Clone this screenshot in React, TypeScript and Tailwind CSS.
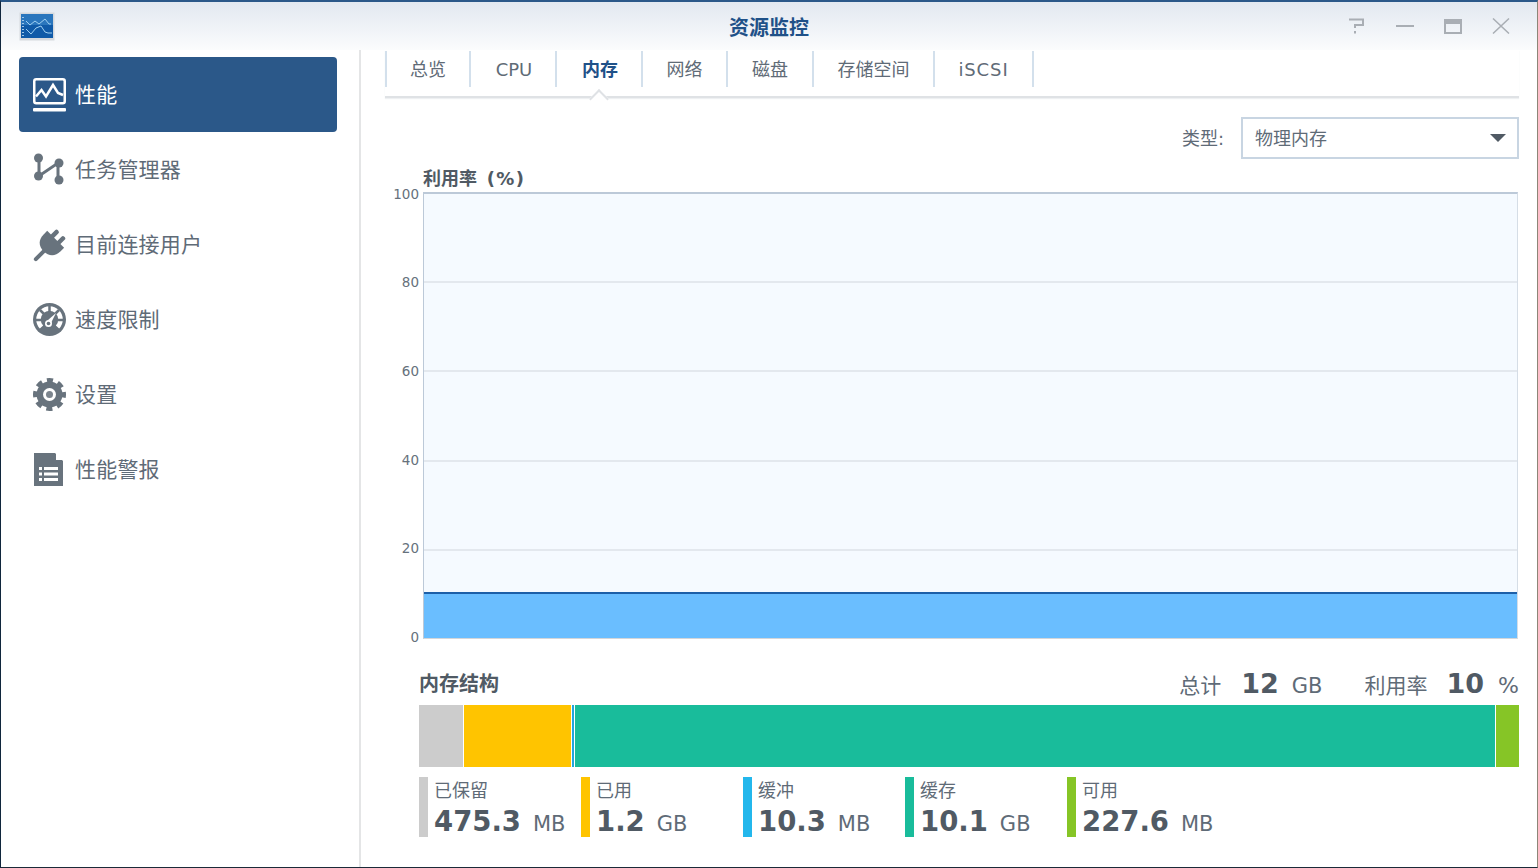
const sans = "font-['DejaVu_Sans','Noto_Sans_CJK_SC',sans-serif]";

const PerfIcon = () => (
    <svg width="33" height="34" viewBox="0 0 33 34" fill="none" stroke="#fff">
        <rect x="1.25" y="1.25" width="30.5" height="24" rx="2" strokeWidth="2.5" />
        <path d="M3 18.500l5.500-6.500 4.500 6.500 7-11.500 5 8 5 2" strokeWidth="2.5" />
        <rect x="0" y="30" width="33" height="3.5" fill="#fff" stroke="none" rx="1" />
    </svg>
);

const TaskIcon = () => (
    <svg width="33" height="33" viewBox="0 0 33 33" fill="#68737d" stroke="#68737d">
        <path d="M6 6v17L25 10v17" fill="none" strokeWidth="3" />
        <circle cx="5.5" cy="5" r="4.5" stroke="none" />
        <circle cx="5.5" cy="23" r="4.5" stroke="none" />
        <circle cx="26" cy="10" r="4.5" stroke="none" />
        <circle cx="26" cy="27" r="4.5" stroke="none" />
    </svg>
);

const PlugIcon = () => (
    <svg width="33" height="34" viewBox="0 0 33 34" fill="#68737d">
        <g transform="rotate(45 17 17)">
            <rect x="10.25" y="1" width="4.5" height="11" rx="2" />
            <rect x="19.25" y="1" width="4.5" height="11" rx="2" />
            <path d="M5 9h24v5c0 8-5 12-12 12S5 22 5 14z" />
            <rect x="15" y="24" width="4" height="15" rx="2" />
        </g>
    </svg>
);

const GaugeIcon = () => (
    <svg width="33" height="33" viewBox="0 0 33 33">
        <circle cx="16.5" cy="16.5" r="16.5" fill="#68737d" />
        <path d="M8.500 24A11 11 0 1 1 24.500 24" fill="none" stroke="#fff" strokeWidth="4.500" />
        <path d="M16.5 3v6M7 7l4 4M26 7l-4 4M3 17h6M30 17h-6" stroke="#68737d" strokeWidth="2.500" />
        <path d="M23 10l-5 10-3.500-2.500z" fill="#fff" />
        <circle cx="15.500" cy="20.500" r="3.500" fill="#fff" />
        <circle cx="15.500" cy="20.500" r="1.800" fill="#68737d" />
    </svg>
);

const GearIcon = () => (
    <svg width="33" height="33" viewBox="0 0 33 33">
        <circle
            cx="16.5"
            cy="16.5"
            r="14"
            fill="none"
            stroke="#68737d"
            strokeWidth="5"
            strokeDasharray="6 5"
            strokeDashoffset="3"
        />
        <circle cx="16.5" cy="16.5" r="13" fill="#68737d" />
        <circle cx="16.5" cy="16.5" r="6.500" fill="#fff" />
        <circle cx="16.5" cy="16.5" r="3.500" fill="#7c858e" />
    </svg>
);

const DocIcon = () => (
    <svg width="33" height="33" viewBox="0 0 33 33">
        <path d="M1 0h21l8 8v25H1z" fill="#68737d" />
        <path d="M23 0l7 7h-7z" fill="#fff" />
        <path
            d="M6 14h3v3H6zM11 14h14v3H11zM6 19.500h3v3H6zM11 19.500h14v3H11zM6 25h3v3H6zM11 25h14v3H11z"
            fill="#fff"
        />
    </svg>
);

const nav = [
    { label: "性能", icon: <PerfIcon />, active: true },
    { label: "任务管理器", icon: <TaskIcon /> },
    { label: "目前连接用户", icon: <PlugIcon /> },
    { label: "速度限制", icon: <GaugeIcon /> },
    { label: "设置", icon: <GearIcon /> },
    { label: "性能警报", icon: <DocIcon /> },
];

const tabs = [
    { label: "总览", w: "w-[86px] border-l-2" },
    { label: "CPU", w: "w-[86px] pl-[2px]" },
    { label: "内存", w: "w-[86px] pl-[2px]", active: true },
    { label: "网络", w: "w-[85px]" },
    { label: "磁盘", w: "w-[86px]" },
    { label: "存储空间", w: "w-[121px]" },
    { label: "iSCSI", w: "w-[99px] tracking-[0.9px]" },
];

const legend = [
    { label: "已保留", value: "475.3", unit: "MB", color: "bg-[#cccccc]" },
    { label: "已用", value: "1.2", unit: "GB", color: "bg-[#ffc400]" },
    { label: "缓冲", value: "10.3", unit: "MB", color: "bg-[#23b7ec]" },
    { label: "缓存", value: "10.1", unit: "GB", color: "bg-[#19bc9b]" },
    { label: "可用", value: "227.6", unit: "MB", color: "bg-[#86c526]" },
];

const AppIcon = () => (
    <svg width="36" height="29" viewBox="0 0 36 29">
        <rect x="0.5" y="0.5" width="35" height="28" fill="#d5d9de" />
        <rect x="2" y="2" width="32" height="24" fill="#0f5aa8" />
        <rect x="2" y="2" width="32" height="11" fill="#2a76bd" />
        <path d="M4 5v19" stroke="#9fc6e8" strokeWidth="2" strokeDasharray="1 2" />
        <path d="M7 9l4 4 5-4 4 3 6-5 4 5h2" fill="none" stroke="#9fd0f2" strokeWidth="1" />
        <path d="M7 17l5 5 5-6 5-2 4 6 3 1h4" fill="none" stroke="#9fd0f2" strokeWidth="1" />
    </svg>
);

const WindowButtons = () => (
    <div className="flex items-center gap-[30px] pr-[27px]">
        <svg width="18" height="16" viewBox="0 0 18 16" fill="none" stroke="#a9aeb4" strokeWidth="2">
            <path d="M1 1.500h14v5.500H7v3" />
            <path d="M7 13v2.500" />
        </svg>
        <div className="h-[2px] w-[18px] bg-[#a9aeb4]" />
        <div className="h-[15px] w-[18px] border-2 border-t-[5px] border-[#a9aeb4]" />
        <svg width="18" height="16" viewBox="0 0 18 16" fill="none" stroke="#a9aeb4" strokeWidth="1.500">
            <path d="M1 0.500l16 15M17 0.500l-16 15" />
        </svg>
    </div>
);

export default function App() {
    return (
        <div
            className={`flex h-[868px] w-[1538px] flex-col overflow-hidden border-t-2 border-r border-b border-l border-t-[#2b5889] border-r-[#8c8677] border-b-[#1b2a38] border-l-[#10263d] bg-white ${sans}`}
        >
            <header className="relative flex h-[48px] shrink-0 items-center justify-between bg-gradient-to-b from-[#e2e8f0] to-[#fbfcfd] pl-[18px]">
                <AppIcon />
                <h1 className="absolute inset-x-0 pt-[3px] text-center text-[20px] font-bold text-[#1f5188]">
                    资源监控
                </h1>
                <WindowButtons />
            </header>

            <div className="flex min-h-0 flex-1">
                <aside className="w-[360px] shrink-0 border-r-2 border-[#e4e5e6] pt-[7px] pl-[18px]">
                    {nav.map((item) => (
                        <div
                            key={item.label}
                            className={`flex h-[75px] w-[318px] items-center gap-[9px] rounded-[4px] pl-[14px] text-[21px] ${
                                item.active ? "bg-[#2b5889] text-white" : "text-[#5f6b77]"
                            }`}
                        >
                            {item.icon}
                            <span className="pt-[2px] tracking-[0.2px]">{item.label}</span>
                        </div>
                    ))}
                </aside>

                <main className="min-w-0 flex-1 pr-[18px] pl-[24px]">
                    <div className="relative flex h-[48px] border-b-2 border-[#dfe2e5] pt-px shadow-[0_1px_1px_#eef0f2]">
                        {tabs.map((tab) => (
                            <div
                                key={tab.label}
                                className={`relative flex h-[36px] items-center justify-center border-r-2 border-[#d3e0ec] text-[18px] ${tab.w} ${
                                    tab.active ? "font-bold text-[#1f5188]" : "text-[#5f6b77]"
                                }`}
                            >
                                {tab.label}
                                {tab.active && (
                                    <div className="absolute top-[41px] left-[35px] h-[14px] w-[14px] rotate-45 border-t-2 border-l-2 border-[#dfe2e5] bg-white" />
                                )}
                            </div>
                        ))}
                    </div>

                    <div className="mt-[19px] flex items-center justify-end gap-[17px] text-[18px] text-[#5f6b77]">
                        <span>类型:</span>
                        <div className="flex h-[42px] w-[278px] items-center justify-between border-2 border-[#c8d5e2] pr-[11px] pl-[12px]">
                            <span>物理内存</span>
                            <span className="h-0 w-0 border-x-[8px] border-t-[8px] border-x-transparent border-t-[#505a64]" />
                        </div>
                    </div>

                    <div className="pl-[38px]">
                        <div className="mt-[6px] h-[27px] text-[18px] leading-[27px] font-bold text-[#505a64]">
                            利用率<span className="ml-[2px] tracking-[1.4px]"> (%)</span>
                        </div>
                    </div>

                    <div className="flex h-[447px]">
                        <div className="flex w-[34px] flex-col justify-between pt-[2px] pb-[2px] text-[13.5px] text-[#66717c]">
                            {[100, 80, 60, 40, 20, 0].map((n) => (
                                <div key={n} className="flex h-0 items-center justify-end">
                                    {n}
                                </div>
                            ))}
                        </div>
                        <div className="ml-[4px] flex w-[1095px] flex-col border-t-2 border-r border-b border-l-[1.5px] border-t-[#bcc9d8] border-r-[#d5dde6] border-b-[#d4d6d9] border-l-[#bcc9d8] bg-[#f5faff]">
                            {[1, 2, 3, 4].map((n) => (
                                <div key={n} className="flex-1 border-b-2 border-[#e3e8ee]" />
                            ))}
                            <div className="flex flex-1 flex-col justify-end">
                                <div className="h-[46px] border-t-2 border-[#1c5fa8] bg-[#6abeff]" />
                            </div>
                        </div>
                    </div>

                    <div className="ml-[34px]">
                        <div className="mt-[30px] flex h-[30px] items-center justify-between text-[#5f6b77]">
                            <h2 className="text-[20px] font-bold text-[#505a64]">内存结构</h2>
                            <div className="flex items-baseline text-[21px]">
                                <span>总计</span>
                                <b className="ml-[20px] text-[27px] text-[#505a64]">12</b>
                                <span className="ml-[13px] text-[21px]">GB</span>
                                <span className="ml-[42px]">利用率</span>
                                <b className="ml-[19px] text-[27px] text-[#505a64]">10</b>
                                <span className="ml-[14px] text-[22px]">%</span>
                            </div>
                        </div>

                        <div className="mt-[6px] flex h-[62px] gap-px">
                            <div className="w-[44px] bg-[#cccccc]" />
                            <div className="w-[107px] bg-[#ffc400]" />
                            <div className="w-[2px] bg-[#23a7dc]" />
                            <div className="flex-1 bg-[#19bc9b]" />
                            <div className="w-[23px] bg-[#86c526]" />
                        </div>

                        <div className="mt-[10px] flex">
                            {legend.map((item) => (
                                <div key={item.label} className="flex h-[60px] w-[162px] gap-[6px]">
                                    <div className={`w-[9px] ${item.color}`} />
                                    <div className="text-[#5f6b77]">
                                        <div className="h-[27px] text-[18px] leading-[27px]">{item.label}</div>
                                        <div className="flex items-baseline pt-px leading-[32px] whitespace-nowrap">
                                            <b className="text-[27.5px] text-[#505a64]">{item.value}</b>
                                            <span className="ml-[12px] text-[21px]">{item.unit}</span>
                                        </div>
                                    </div>
                                </div>
                            ))}
                        </div>
                    </div>
                </main>
            </div>
        </div>
    );
}
